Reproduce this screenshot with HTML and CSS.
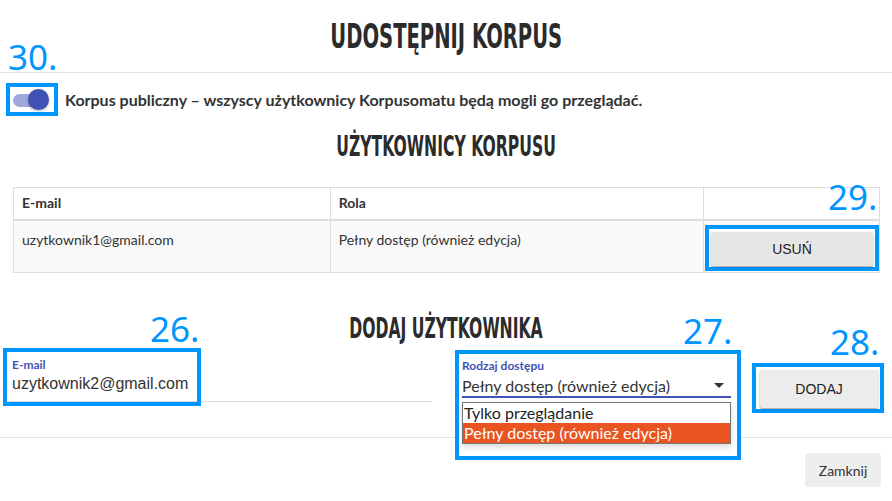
FILE: index.html
```html
<!DOCTYPE html>
<html lang="pl">
<head>
<meta charset="utf-8">
<link rel="stylesheet" href="styles.css">
</head>
<body>
<div class="modal">
  <div class="head">
    <h1 class="title"><span class="cond">UDOSTĘPNIJ KORPUS</span></h1>
  </div>
  <div class="content">
    <div class="toggle-row">
      <div class="toggle">
        <span class="track"></span>
        <span class="knob"></span>
      </div>
      <span class="toggle-label">Korpus publiczny – wszyscy użytkownicy Korpusomatu będą mogli go przeglądać.</span>
    </div>
    <h2 class="subtitle"><span class="cond">UŻYTKOWNICY KORPUSU</span></h2>
    <div class="table-wrap">
      <table class="users">
        <thead>
          <tr><th class="c1">E-mail</th><th class="c2">Rola</th><th class="c3"></th></tr>
        </thead>
        <tbody>
          <tr>
            <td>uzytkownik1@gmail.com</td>
            <td>Pełny dostęp (również edycja)</td>
            <td class="btn-cell"><div class="usun-box"><button class="btn usun">USUŃ</button></div></td>
          </tr>
        </tbody>
      </table>
    </div>
    <h2 class="subtitle add-title"><span class="cond">DODAJ UŻYTKOWNIKA</span></h2>
    <div class="form-row">
      <div class="field email-field">
        <div class="flabel">E-mail</div>
        <div class="fvalue">uzytkownik2@gmail.com</div>
        <span class="email-mark"></span>
      </div>
      <div class="select-wrap">
        <div class="flabel">Rodzaj dostępu</div>
        <div class="svalue"><span>Pełny dostęp (również edycja)</span><span class="arrow"></span></div>
        <ul class="options">
          <li>Tylko przeglądanie</li>
          <li class="sel">Pełny dostęp (również edycja)</li>
        </ul>
      </div>
      <div class="add-btn-wrap">
        <button class="btn add-btn">DODAJ</button>
      </div>
    </div>
  </div>
  <div class="foot">
    <button class="close">Zamknij</button>
  </div>
  <span class="anno anno30">30.</span>
  <span class="anno anno29">29.</span>
  <span class="anno anno26">26.</span>
  <span class="anno anno27">27.</span>
  <span class="anno anno28">28.</span>
</div>
</body>
</html>
```
FILE: styles.css
```css
* { box-sizing: border-box; }
body {
  margin: 0;
  background: #fff;
  font-family: Lato, "Noto Sans", sans-serif;
  color: #333;
}
.modal { position: relative; width: 892px; height: 501px; overflow: hidden; }
.head {
  height: 73px;
  border-bottom: 1px solid #e2e2e2;
  text-align: center;
}
.cond {
  display: inline-block;
  font-family: "Liberation Sans Narrow", "DejaVu Sans Condensed", "Liberation Sans", sans-serif;
  font-weight: bold;
  color: #2b2b2b;
  transform: scaleX(0.62);
  white-space: nowrap;
}
.title {
  margin: 0;
  padding-top: 13px;
  font-size: 34px;
  line-height: 44px;
  font-weight: bold;
}
.title .cond { transform: scaleX(0.64); }
.anno {
  position: absolute;
  font-family: "Noto Sans", "DejaVu Sans", sans-serif;
  font-weight: 400;
  color: #0096ff;
  font-size: 35px;
  line-height: 35px;
  z-index: 3;
}
.anno30 { left: 8px; top: 39px; }
.anno29 { left: 828px; top: 179px; }
.anno26 { left: 150px; top: 311px; }
.anno27 { left: 683px; top: 313px; }
.anno28 { left: 830px; top: 324px; }
.toggle-row {
  display: flex;
  align-items: center;
  padding-left: 6px;
  padding-top: 10px;
}
.toggle {
  position: relative;
  width: 52px;
  height: 33px;
  border: 4px solid #0096ff;
  flex: none;
}
.track {
  position: absolute;
  left: 3px; top: 7px;
  width: 34px; height: 13px;
  border-radius: 7px;
  background: #9fa8da;
}
.knob {
  position: absolute;
  left: 18px; top: 2px;
  width: 21px; height: 21px;
  border-radius: 50%;
  background: #3f51b5;
  box-shadow: 0 1px 3px rgba(0,0,0,0.3);
}
.toggle-label {
  margin-left: 7px;
  font-size: 16px;
  font-weight: bold;
  color: #333;
}
.subtitle {
  margin: 13px 0 0 0;
  text-align: center;
  font-size: 28px;
  line-height: 32px;
}
.table-wrap {
  margin: 24px 12px 0 13px;
}
.users {
  width: 100%;
  border-collapse: collapse;
  font-size: 14px;
}
.users th, .users td {
  border: 1px solid #ddd;
  text-align: left;
  vertical-align: top;
  padding: 0 8px;
}
.users th {
  height: 32px;
  line-height: 30px;
  font-weight: bold;
  border-bottom: 2px solid #ddd;
}
.users td {
  background: #f9f9f9;
  height: 53px;
  padding-top: 10px;
  line-height: 18px;
}
.users .c1 { width: 318px; }
.users .c2 { width: 376px; }
.users td.btn-cell { padding: 4px 0 0 1px; }
.usun-box {
  width: 174px;
  height: 46px;
  border: 4px solid #0096ff;
  padding: 3px 2px 0 2px;
  background: #fff;
}
.btn {
  font-family: "Liberation Sans", Arial, sans-serif;
  font-size: 14px;
  color: #222;
  background: #e6e6e6;
  border: none;
  border-radius: 2px;
  box-shadow: 0 1px 2px rgba(0,0,0,0.4);
}
.usun { width: 162px; height: 34px; }
.add-title { margin-top: 38px; }
.form-row {
  display: flex;
  align-items: flex-start;
  margin-top: 3px;
  padding-left: 3px;
  height: 54px;
}
.email-field {
  position: relative;
  width: 429px;
  height: 54px;
  flex: none;
  border-bottom: 1px solid #ddd;
  padding: 10px 0 0 9px;
}
.email-mark {
  position: absolute;
  left: 0; top: 0;
  width: 198px;
  height: 58px;
  border: 4px solid #0096ff;
}
.flabel {
  font-size: 12px;
  font-weight: bold;
  color: #3f51b5;
  line-height: 13px;
}
.fvalue {
  font-family: "Liberation Sans", Arial, sans-serif;
  font-size: 16px;
  line-height: 20px;
  margin-top: 3px;
  color: #333;
}
.select-wrap {
  position: relative;
  z-index: 2;
  flex: none;
  margin-left: 23px;
  margin-top: 2px;
  width: 286px;
  height: 110px;
  border: 4px solid #0096ff;
  padding: 5px 6px 0 3px;
  background: #fff;
}
.svalue {
  display: flex;
  justify-content: space-between;
  align-items: center;
  margin-top: 2px;
  height: 24px;
  border-bottom: 2px solid #3f51b5;
  font-size: 16px;
  color: #333;
  padding-right: 7px;
}
.arrow {
  width: 0; height: 0;
  border-left: 5px solid transparent;
  border-right: 5px solid transparent;
  border-top: 5px solid #333;
}
.options {
  list-style: none;
  margin: 4px 0 0 0;
  padding: 0;
  border: 1px solid #767676;
  font-size: 16px;
  line-height: 20px;
  color: #222;
  box-shadow: 0 3px 6px rgba(0,0,0,0.15);
}
.options li { padding-left: 1px; height: 20px; }
.options li.sel { background: #e95420; color: #fff; }
.add-btn-wrap {
  flex: none;
  margin-left: 11px;
  margin-top: 15px;
  width: 132px;
  height: 50px;
  border: 4px solid #0096ff;
  padding: 3px 2px 0 4px;
}
.add-btn {
  width: 118px;
  height: 38px;
  background: #ececec;
}
.foot {
  border-top: 1px solid #e2e2e2;
  margin-top: 35px;
  display: flex;
  justify-content: flex-end;
  padding: 15px 11px 0 0;
}
.close {
  font-family: Lato, sans-serif;
  font-size: 14px;
  color: #333;
  background: #eee;
  border: none;
  border-radius: 3px;
  width: 76px;
  height: 34px;
}
```
